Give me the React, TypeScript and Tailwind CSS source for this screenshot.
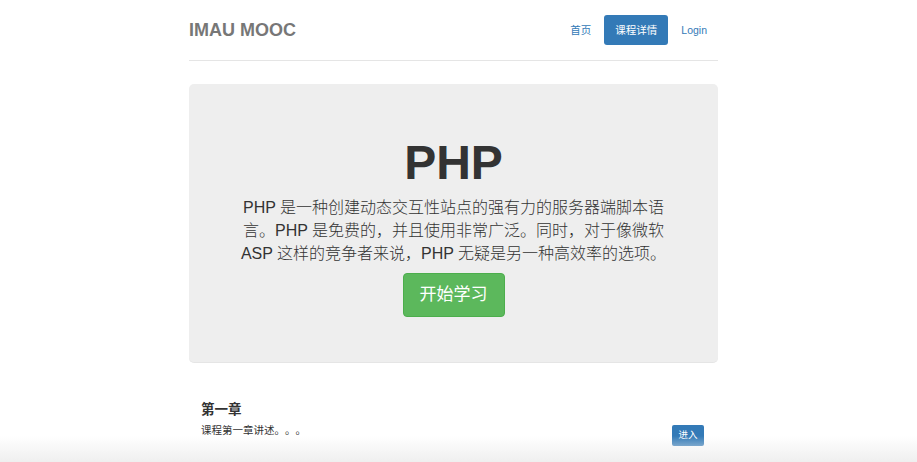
const sans = "font-['Liberation_Sans','Noto_Sans_CJK_SC',sans-serif]";

const NavPill = ({ label, active }: { label: string; active?: boolean }) => (
  <a
    href="#"
    className={
      active
        ? "h-[30px] px-[11px] leading-[30px] rounded-[3px] bg-[#337ab7] text-white"
        : "h-[30px] px-[11px] leading-[30px] rounded-[3px] text-[#337ab7]"
    }
  >
    {label}
  </a>
);

export default function App() {
  return (
    <div
      className={`relative h-[462px] overflow-hidden bg-white text-[#333] [text-spacing-trim:space-all] ${sans}`}
    >
      <div className="ml-[189px] w-[529px] pt-[15px]">
        {/* header */}
        <header className="flex items-center justify-between border-b border-[#e5e5e5] pb-[15px]">
          <h3 className="text-[18px] leading-[30px] font-bold text-[#777]">IMAU MOOC</h3>
          <nav className="flex gap-[2px] text-[10.5px]">
            <NavPill label="首页" />
            <NavPill label="课程详情" active />
            <NavPill label="Login" />
          </nav>
        </header>

        {/* jumbotron */}
        <div className="mt-[23px] rounded-[5px] bg-[#eee] border-b border-[#e5e5e5] pt-[52px] pb-[45px] text-center">
          <h1 className="text-[48px] leading-[53px] font-bold text-[#333]">PHP</h1>
          <p className="mx-auto mt-[7px] w-[430px] text-[16px] leading-[23px] font-light text-[#333]">
            PHP 是一种创建动态交互性站点的强有力的服务器端脚本语言。PHP 是免费的，并且使用非常广泛。同时，对于像微软 ASP 这样的竞争者来说，PHP 无疑是另一种高效率的选项。
          </p>
          <a
            href="#"
            className="mt-[8px] inline-flex h-[44px] w-[102px] items-center justify-center rounded-[4px] border border-[#4cae4c] bg-[#5cb85c] text-[17px] text-white"
          >
            开始学习
          </a>
        </div>

        {/* chapters */}
        <div className="mt-[39px] pl-[12px] pr-[14px]">
          <h4 className="text-[13.5px] leading-[15px] font-bold text-[#333]">第一章</h4>
          <div className="mt-[6px] flex items-start justify-between">
            <p className="text-[10.5px] leading-[15px] text-[#333]">课程第一章讲述。。。</p>
            <a
              href="#"
              className="mt-[1.5px] flex h-[21px] w-[32px] items-center justify-center rounded-[2px] bg-[#337ab7] text-[9.5px] text-white"
            >
              进入
            </a>
          </div>
        </div>
      </div>

      {/* bottom fade */}
      <div className="pointer-events-none absolute inset-x-0 bottom-0 h-[26px] bg-gradient-to-b from-white/0 to-[#efefef]" />
    </div>
  );
}
